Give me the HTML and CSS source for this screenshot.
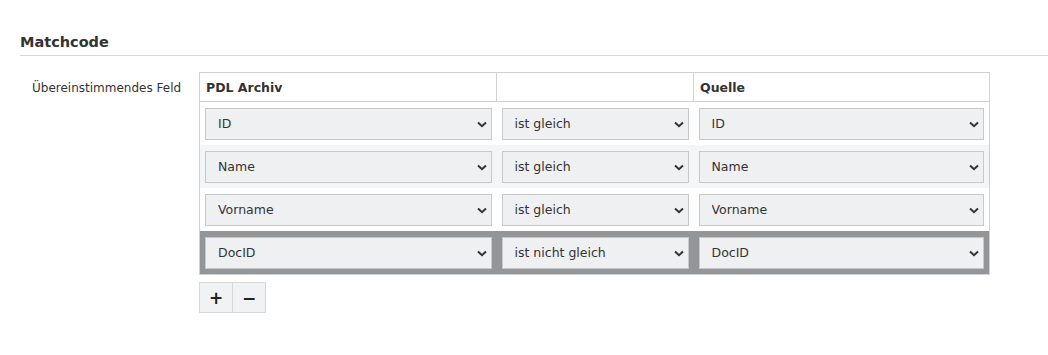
FILE: index.html
```html
<!DOCTYPE html>
<html lang="de">
<head>
  <meta charset="UTF-8" />
  <title>Matchcode</title>
  <link rel="stylesheet" href="styles.css">
</head>
<body>
  <div class="section">
    <h2 class="section-title">Matchcode</h2>

    <div class="form-row">
      <label class="form-label">Übereinstimmendes Feld</label>

      <div class="form-field">
        <table class="match-table">
          <colgroup>
            <col class="col-left">
            <col class="col-op">
            <col class="col-right">
          </colgroup>
          <thead>
            <tr>
              <th>PDL Archiv</th>
              <th></th>
              <th>Quelle</th>
            </tr>
          </thead>
          <tbody id="matchRows"></tbody>
        </table>

        <div class="btn-group">
          <button class="btn" type="button">+</button>
          <button class="btn" type="button">&minus;</button>
        </div>
      </div>
    </div>
  </div>

  <script>
    const rows = [
      { left: "ID", op: "ist gleich", right: "ID" },
      { left: "Name", op: "ist gleich", right: "Name" },
      { left: "Vorname", op: "ist gleich", right: "Vorname" },
      { left: "DocID", op: "ist nicht gleich", right: "DocID", selected: true }
    ];

    const chevron = '<svg class="chevron" width="10" height="7" viewBox="0 0 10 7"><path d="M1 1.5 L5 5.2 L9 1.5" fill="none" stroke="#333" stroke-width="2"/></svg>';

    function selectCell(value) {
      return '<td><span class="select-wrap"><select class="select"><option>' + value +
        '</option></select>' + chevron + '</span></td>';
    }

    const body = document.getElementById("matchRows");
    rows.forEach(row => {
      const tr = document.createElement("tr");
      if (row.selected) tr.className = "selected";
      tr.innerHTML = selectCell(row.left) + selectCell(row.op) + selectCell(row.right);
      body.appendChild(tr);
    });
  </script>
</body>
</html>
```

FILE: styles.css
```css
:root {
  --text-color: #333;
  --border-color: #cfd1d3;
  --select-bg: #eff0f2;
  --stripe-bg: #f4f5f6;
  --selected-bg: #939699;
}

body {
  margin: 0;
  font-family: "DejaVu Sans", Tahoma, sans-serif;
  font-size: 12px;
  color: var(--text-color);
  background-color: white;
}

.section {
  padding: 35px 0 0 20px;
}

.section-title {
  margin: 0;
  padding-bottom: 6px;
  font-size: 14.5px;
  font-weight: bold;
  line-height: 14px;
  border-bottom: 1px solid #d4d6d8;
}

.form-row {
  display: flex;
  margin-top: 16px;
}

.form-label {
  width: 167px;
  padding: 9px 0 0 12px;
  line-height: 14px;
}

.match-table {
  width: 790px;
  border-collapse: collapse;
  table-layout: fixed;
  border: 1px solid var(--border-color);
}

.col-left { width: 297px; }
.col-op { width: 197px; }
.col-right { width: 296px; }

.match-table th {
  height: 28px;
  padding: 0 6px;
  text-align: left;
  font-size: 12.5px;
  font-weight: bold;
  border: 1px solid var(--border-color);
}

.match-table td {
  padding: 5px;
  height: 33px;
}

.match-table tbody tr:nth-child(2) {
  background-color: var(--stripe-bg);
}

.match-table tbody tr.selected {
  background-color: var(--selected-bg);
}

.select-wrap {
  position: relative;
  display: block;
}

.select {
  display: block;
  width: 100%;
  height: 32px;
  margin: 0;
  padding: 0 24px 0 12px;
  font-family: inherit;
  font-size: 12.5px;
  color: var(--text-color);
  background-color: var(--select-bg);
  border: 1px solid #c6c8ca;
  border-radius: 0;
  appearance: none;
  -webkit-appearance: none;
  outline: none;
}

.chevron {
  position: absolute;
  right: 5px;
  top: 13px;
  pointer-events: none;
}

.btn-group {
  display: flex;
  margin-top: 7px;
}

.btn {
  width: 34px;
  height: 31px;
  padding: 0;
  font-family: inherit;
  font-size: 17px;
  font-weight: bold;
  color: #222;
  background-color: #f1f2f3;
  border: 1px solid #d6d8da;
  cursor: pointer;
}

.btn + .btn {
  margin-left: -1px;
}
```
